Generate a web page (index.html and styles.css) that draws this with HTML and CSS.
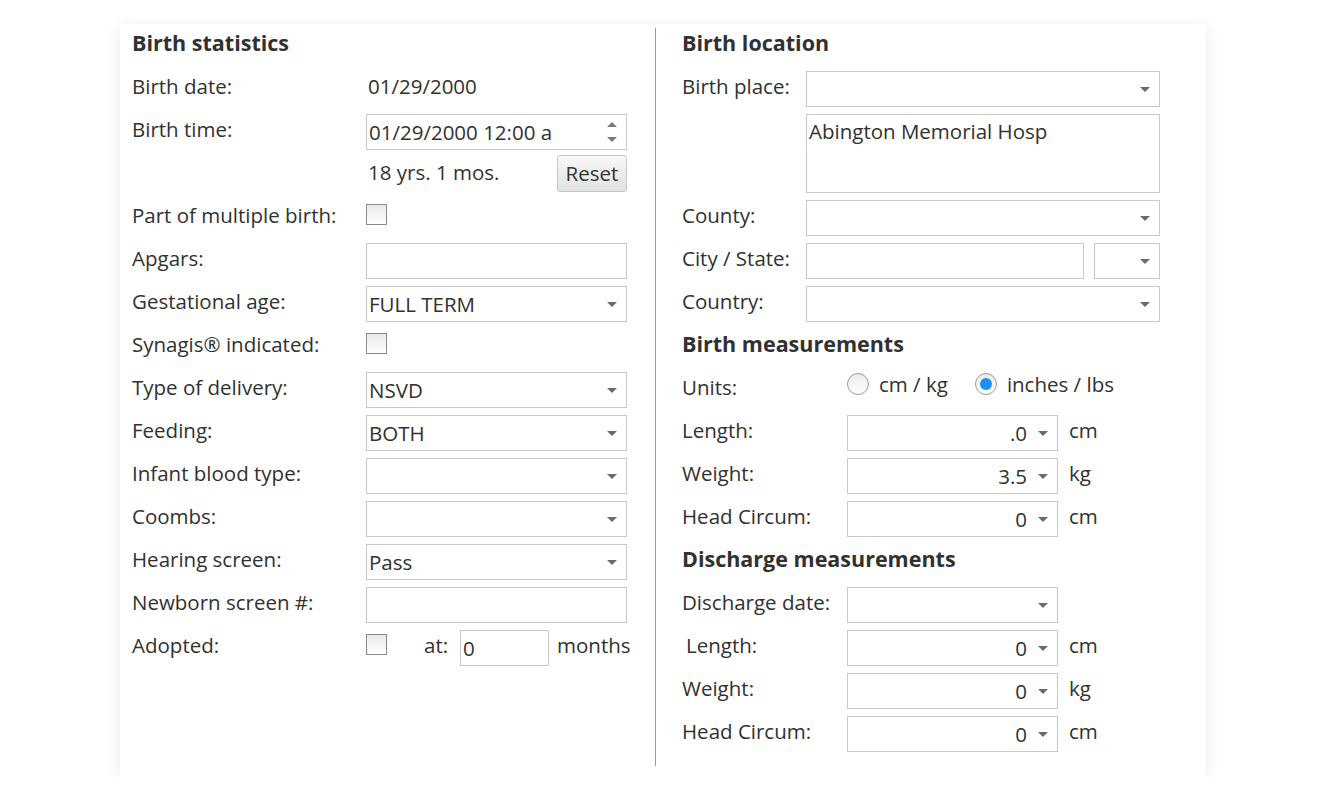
FILE: index.html
```html
<!DOCTYPE html>
<html>
<head>
<meta charset="utf-8">
<link rel="stylesheet" href="styles.css">
</head>
<body>
<div class="page">
  <div class="card">
    <div class="col col-left">
      <div class="row head"><span class="lbl">Birth statistics</span></div>
      <div class="row"><span class="lbl w-l">Birth date:</span><span class="lbl val">01/29/2000</span></div>
      <div class="row"><span class="lbl w-l">Birth time:</span>
        <div class="field w-lf">01/29/2000 12:00 a<span class="spin-up"></span><span class="spin-down"></span></div>
      </div>
      <div class="row"><span class="lbl w-l"></span>
        <div class="age"><span class="lbl val">18 yrs. 1 mos.</span><span class="btn">Reset</span></div>
      </div>
      <div class="row"><span class="lbl w-l">Part of multiple birth:</span><span class="chk"></span></div>
      <div class="row"><span class="lbl w-l">Apgars:</span><div class="field w-lf"></div></div>
      <div class="row"><span class="lbl w-l">Gestational age:</span><div class="field w-lf">FULL TERM<span class="arrow"></span></div></div>
      <div class="row"><span class="lbl w-l">Synagis® indicated:</span><span class="chk"></span></div>
      <div class="row"><span class="lbl w-l">Type of delivery:</span><div class="field w-lf">NSVD<span class="arrow"></span></div></div>
      <div class="row"><span class="lbl w-l">Feeding:</span><div class="field w-lf">BOTH<span class="arrow"></span></div></div>
      <div class="row"><span class="lbl w-l">Infant blood type:</span><div class="field w-lf"><span class="arrow"></span></div></div>
      <div class="row"><span class="lbl w-l">Coombs:</span><div class="field w-lf"><span class="arrow"></span></div></div>
      <div class="row"><span class="lbl w-l">Hearing screen:</span><div class="field w-lf">Pass<span class="arrow"></span></div></div>
      <div class="row"><span class="lbl w-l">Newborn screen #:</span><div class="field w-lf"></div></div>
      <div class="row"><span class="lbl w-l">Adopted:</span>
        <span class="chk"></span><span class="lbl at">at:</span><div class="field w-at">0</div><span class="lbl months">months</span>
      </div>
    </div>
    <div class="col col-right">
      <div class="row head"><span class="lbl">Birth location</span></div>
      <div class="row"><span class="lbl w-r">Birth place:</span><div class="field w-rf"><span class="arrow"></span></div></div>
      <div class="row tall"><span class="lbl w-r"></span><div class="field w-rf area">Abington Memorial Hosp</div></div>
      <div class="row"><span class="lbl w-r">County:</span><div class="field w-rf"><span class="arrow"></span></div></div>
      <div class="row"><span class="lbl w-r">City / State:</span><div class="field w-city"></div><div class="field w-state"><span class="arrow"></span></div></div>
      <div class="row"><span class="lbl w-r">Country:</span><div class="field w-rf"><span class="arrow"></span></div></div>
      <div class="row head"><span class="lbl">Birth measurements</span></div>
      <div class="row"><span class="lbl w-m">Units:</span>
        <div class="radios">
          <span class="radio"></span><span class="rtext">cm / kg</span>
          <span class="radio on"></span><span class="rtext">inches / lbs</span>
        </div>
      </div>
      <div class="row"><span class="lbl w-m">Length:</span><div class="field w-mf num">.0<span class="arrow"></span></div><span class="lbl unit">cm</span></div>
      <div class="row"><span class="lbl w-m">Weight:</span><div class="field w-mf num">3.5<span class="arrow"></span></div><span class="lbl unit">kg</span></div>
      <div class="row"><span class="lbl w-m">Head Circum:</span><div class="field w-mf num">0<span class="arrow"></span></div><span class="lbl unit">cm</span></div>
      <div class="row head"><span class="lbl">Discharge measurements</span></div>
      <div class="row"><span class="lbl w-m">Discharge date:</span><div class="field w-mf"><span class="arrow"></span></div></div>
      <div class="row"><span class="lbl w-m indent">Length:</span><div class="field w-mf num">0<span class="arrow"></span></div><span class="lbl unit">cm</span></div>
      <div class="row"><span class="lbl w-m">Weight:</span><div class="field w-mf num">0<span class="arrow"></span></div><span class="lbl unit">kg</span></div>
      <div class="row"><span class="lbl w-m">Head Circum:</span><div class="field w-mf num">0<span class="arrow"></span></div><span class="lbl unit">cm</span></div>
    </div>
  </div>
</div>
</body>
</html>
```

FILE: styles.css
```css
html, body {
  margin: 0;
  padding: 0;
  background: #ffffff;
}
body {
  font-family: "Open Sans", "Noto Sans", "Liberation Sans", sans-serif;
  font-size: 20.5px;
  color: #313131;
}
.page {
  padding: 24px 0 0 120px;
}
.card {
  width: 1086px;
  height: 753px;
  box-sizing: border-box;
  padding: 4px 0 11px;
  background: #fff;
  box-shadow: 0 3px 14px rgba(0, 0, 0, 0.09);
  display: grid;
  grid-template-columns: 536px 550px;
}
.col-left {
  padding-left: 12px;
  border-right: 1px solid #9a9a9a;
}
.col-right {
  padding-left: 26px;
}
.row {
  display: flex;
  align-items: flex-start;
  height: 36px;
  margin-bottom: 7px;
}
.row.tall {
  height: 79px;
  margin-bottom: 7px;
}
.lbl {
  display: block;
  line-height: 22px;
  padding-top: 4px;
  white-space: nowrap;
}
.head .lbl {
  font-weight: bold;
  font-size: 21.5px;
}
.w-l { width: 234px; flex: none; }
.w-r { width: 124px; flex: none; }
.w-m { width: 165px; flex: none; }
.val { padding-left: 2px; }
.indent { padding-left: 4px; width: 161px; }

.field {
  position: relative;
  box-sizing: border-box;
  height: 36px;
  border: 1px solid #c9c9c9;
  line-height: 34px;
  padding: 0 2px;
  white-space: nowrap;
  background: #fff;
  flex: none;
  overflow: hidden;
}
.w-lf { width: 261px; }
.w-rf { width: 354px; }
.w-city { width: 278px; margin-right: 10px; }
.w-state { width: 66px; }
.w-mf { width: 211px; }
.w-at { width: 89px; }
.area {
  height: 79px;
  line-height: 22px;
  padding-top: 5px;
}
.num {
  text-align: right;
  padding-right: 30px;
}
.arrow {
  position: absolute;
  right: 9px;
  top: 15px;
  width: 0;
  height: 0;
  border-left: 5px solid transparent;
  border-right: 5px solid transparent;
  border-top: 5px solid #6a6a6a;
}
.spin-up, .spin-down {
  position: absolute;
  right: 9px;
  width: 0;
  height: 0;
  border-left: 5px solid transparent;
  border-right: 5px solid transparent;
}
.spin-up {
  top: 7px;
  border-bottom: 5px solid #7a7a7a;
}
.spin-down {
  top: 22px;
  border-top: 5px solid #7a7a7a;
}
.age {
  width: 261px;
  display: flex;
  justify-content: space-between;
  align-items: flex-start;
}
.btn {
  display: block;
  box-sizing: border-box;
  width: 70px;
  height: 37px;
  margin-top: -2px;
  border: 1px solid #c6c6c6;
  border-radius: 3px;
  background: linear-gradient(#f8f8f8, #e2e2e2);
  text-align: center;
  line-height: 34px;
  color: #333;
}
.chk {
  display: block;
  flex: none;
  box-sizing: border-box;
  width: 21px;
  height: 21px;
  margin-top: 4px;
  border: 1.5px solid #8a8a8a;
  background: linear-gradient(#e9e9e9, #ffffff);
}
.at {
  margin-left: 37px;
  width: 36px;
}
.months {
  margin-left: 8px;
}
.unit {
  margin-left: 11px;
}
.radios {
  display: flex;
  align-items: center;
  height: 22px;
  margin-top: 1px;
}
.radio {
  display: block;
  box-sizing: border-box;
  width: 22px;
  height: 22px;
  border-radius: 50%;
  border: 1px solid #9a9a9a;
  background: linear-gradient(#ebebeb, #ffffff);
  position: relative;
  flex: none;
}
.radio.on::after {
  content: "";
  position: absolute;
  left: 4px;
  top: 4px;
  width: 12px;
  height: 12px;
  border-radius: 50%;
  background: #1a90f2;
}
.rtext {
  margin-left: 10px;
  margin-right: 27px;
  line-height: 22px;
}
```
